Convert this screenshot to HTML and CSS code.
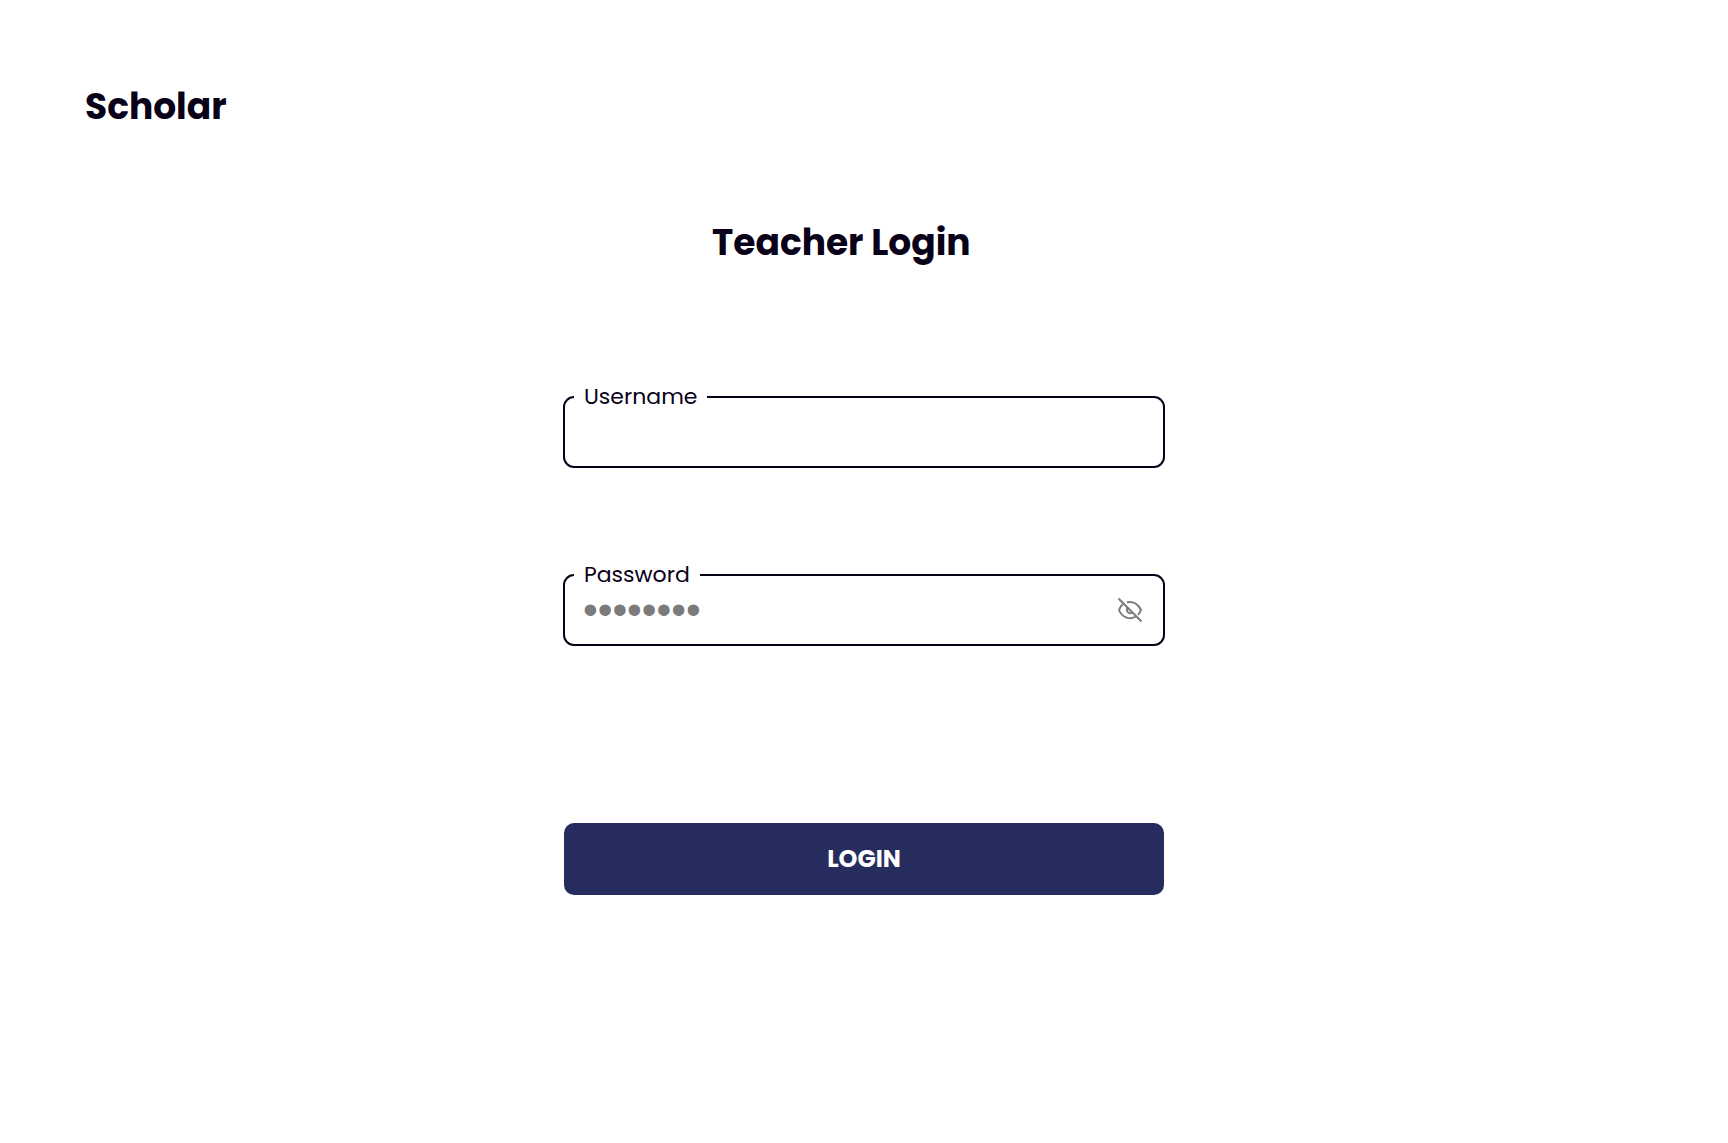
FILE: index.html
```html
<!DOCTYPE html>
<html lang="en">
<head>
  <meta charset="utf-8">
  <meta name="viewport" content="width=device-width, initial-scale=1">
  <title>Scholar</title>
  <link rel="stylesheet" href="styles.css">
</head>
<body>
  <header class="site-header">
    <a class="brand" href="#">Scholar</a>
  </header>
  <main class="page">
    <form class="login-form">
      <h1 class="title">Teacher Login</h1>
      <div class="field">
        <label class="field-label" for="username">Username</label>
        <input class="field-input" id="username" name="username" type="text" autocomplete="username">
      </div>
      <div class="field">
        <label class="field-label" for="password">Password</label>
        <input class="field-input field-input-password" id="password" name="password" type="password" placeholder="••••••••" autocomplete="current-password">
        <button class="toggle" type="button" aria-label="Show password">
          <svg class="toggle-icon" viewBox="0 0 24 24" width="24" height="24" fill="none" stroke="currentColor" stroke-width="2" aria-hidden="true">
            <path d="M0.5 0.5 23.5 23.5"/>
            <path d="M9 4.3C15.500 2.800 20.500 6.500 23 12C22.300 14 21.200 15.600 20 16.800"/>
            <path d="M4.800 6.300C3 7.800 1.700 9.700 1 12C4.200 20 12.500 22.300 18.300 18.300"/>
            <path d="M9.400 9.700C8 12 9.500 15.300 12.300 15.200C13.300 15.200 14.200 14.800 14.700 14.200"/>
          </svg>
        </button>
      </div>
      <button class="submit" type="submit">LOGIN</button>
    </form>
  </main>
</body>
</html>
```
FILE: styles.css
```css
* {
  box-sizing: border-box;
}

body {
  margin: 0;
  background: #fff;
  color: #080118;
  font-family: Poppins, Inter, sans-serif;
}

.site-header {
  padding: 80px 85px 0;
}

.brand {
  display: block;
  color: inherit;
  font-size: 36px;
  font-weight: 700;
  line-height: 54px;
  text-decoration: none;
}

.page {
  display: flex;
  justify-content: center;
  padding: 82px 24px;
}

.login-form {
  display: flex;
  flex-direction: column;
  width: 100%;
  max-width: 602px;
}

.title {
  margin: 0 0 126px;
  padding-left: 149px;
  font-size: 36px;
  font-weight: 700;
  line-height: 54px;
}

.field {
  position: relative;
  margin-bottom: 106px;
}

.field-label {
  position: absolute;
  top: -15px;
  left: 11px;
  padding: 0 10px;
  background: #fff;
  font-size: 22px;
  line-height: 32px;
}

.field-input {
  display: block;
  width: 100%;
  height: 72px;
  padding: 0 18px;
  border: 2px solid #080118;
  border-radius: 11px;
  background: #fff;
  color: inherit;
  font: inherit;
  font-size: 22px;
}

.field-input-password {
  padding-right: 64px;
  font-family: "Liberation Sans", sans-serif;
  font-size: 42px;
}

.field-input::placeholder {
  color: #7b7b7b;
}

.toggle {
  position: absolute;
  top: 24px;
  right: 23px;
  display: flex;
  padding: 0;
  border: 0;
  background: none;
  color: #7b7b7b;
  cursor: pointer;
}

.submit {
  height: 72px;
  margin: 71px 1px 0;
  padding: 0 0 2px;
  border: 0;
  border-radius: 10px;
  background: #272c5e;
  color: #fff;
  font: inherit;
  font-size: 24px;
  font-weight: 700;
  cursor: pointer;
}
```
